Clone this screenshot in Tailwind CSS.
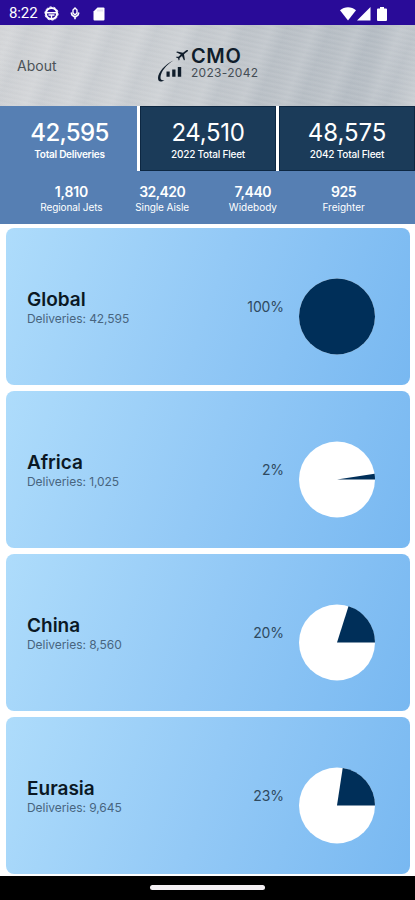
<!DOCTYPE html>
<html lang="en">
<head>
  <meta charset="UTF-8">
  <meta name="viewport" content="width=device-width, initial-scale=1.0">
  <title>CMO 2023-2042</title>
  <script src="https://cdn.jsdelivr.net/npm/@tailwindcss/browser@4"></script>
</head>
<body class="h-[900px] bg-white font-['Inter',sans-serif] flex flex-col overflow-hidden whitespace-nowrap">
  <!-- Status bar -->
  <div class="h-[25px] shrink-0 bg-[#290b98] text-white flex items-center pl-[9px] pr-[28px] pt-[2px]">
    <span class="w-[35px] font-['Roboto',sans-serif] text-[15px] leading-none tracking-[-0.1px]">8:22</span>
    <svg class="w-[15px] h-[15px]" viewBox="0 0 15 15" fill="none" stroke="white">
      <circle cx="7.5" cy="7.5" r="5.6" stroke-width="2"/>
      <circle cx="7.5" cy="7.5" r="6.7" stroke-width="1" stroke-dasharray="2 2.2"/>
      <path d="M3 6.8h9M4.500 9h6" stroke-width="1.6"/>
      <path d="M7.5 9v3.5" stroke-width="1.4"/>
    </svg>
    <svg class="ml-[11px] w-[10px] h-[13px]" viewBox="0 0 10 13" fill="none" stroke="white">
      <path d="M5 1L7 3V6L5 8L3 6V3Z" stroke-width="1.4"/>
      <path d="M1.200 5.500L2 8L5 10.300L8 8L8.800 5.500M5 9V12.300" stroke-width="1.6"/>
    </svg>
    <svg class="ml-[13px] w-[12px] h-[14px]" viewBox="0 0 12 14">
      <path d="M4.500 .5H10.500Q11.500 .5 11.500 1.500V12.500Q11.500 13.500 10.500 13.500H1.500Q.5 13.500 .5 12.500V4.500Z" fill="white"/>
      <path d="M5 2.500v2M7 2.500v2M9 2.500v2" stroke="#290b98" stroke-width=".7" opacity=".3"/>
    </svg>
    <div class="ml-auto flex items-center">
      <svg class="w-[16px] h-[14px]" viewBox="0 0 16 14" fill="white"><path d="M0 3.200C4.500-.7 11.500-.7 16 3.200L8 13.500Z"/></svg>
      <svg class="ml-[1px] w-[14px] h-[14px]" viewBox="0 0 14 14" fill="white"><path d="M13.500 0V13.500H0Z"/></svg>
      <svg class="ml-[6px] w-[10px] h-[14px]" viewBox="0 0 10 14" fill="white"><path d="M3 0H7V1.500H9Q10 1.500 10 2.500V13Q10 14 9 14H1Q0 14 0 13V2.500Q0 1.500 1 1.500H3Z"/></svg>
    </div>
  </div>

  <!-- Brushed header -->
  <header class="h-[81px] shrink-0 flex bg-[repeating-linear-gradient(192deg,#ffffff00_0px,#ffffff18_2px,#ffffff00_5px),repeating-linear-gradient(112deg,#ffffff00_0px,#ffffff18_13px,#8090a010_27px,#ffffff00_40px),linear-gradient(100deg,#d0d2d5_0%,#c9cdd1_40%,#bac0c6_65%,#b5bcc3_88%,#c4c9ce_100%)]">
    <a class="ml-[17px] mt-[32px] w-[140px] text-[14px] leading-[18px] tracking-[0.05px] text-[#4b5258]">About</a>
    <svg class="mt-[22px] w-[34px] h-[37px]" viewBox="0 0 34 37" fill="#101d2b">
      <path d="M16.500 13.500C8 17 1 25.500 1 31C1 35.300 4.300 35.300 7.500 33C5 33.700 3.300 32.800 3.500 30C4 24.500 9 18 16.500 13.500Z"/>
      <path d="M31 3.400C30.300 2.700 29.300 3.200 28 4.200L26 5.800L20 4.400L19.200 5.200L23.800 7.600L21.500 9.800L19.300 9.700L18.800 10.300L21 11.300L21.700 13.500L22.500 13L22.600 11L25 9L27 13.500L27.900 12.800L27 7.200L29 5.500C30.400 4.500 31.400 3.900 31 3.400Z"/>
      <path d="M9.500 24.500h3.200v5.200h-3.200zM15.200 22.500h3.300v7.200h-3.300zM20.800 20h3.400v9.700h-3.400z"/>
    </svg>
    <div class="mt-[19px]">
      <div class="text-[20px] leading-[24px] font-semibold tracking-[0.6px] text-[#101d2b]">CMO</div>
      <div class="-mt-px text-[12px] leading-[12px] tracking-[0.3px] text-[#454d55]">2023-2042</div>
    </div>
  </header>

  <!-- Totals -->
  <div class="h-[65px] shrink-0 bg-white grid grid-cols-[137px_136px_136px] gap-[3px] text-white text-center">
    <div class="bg-[#567fb3] pt-[13px] pl-[2px] font-medium">
      <div class="text-[24px] leading-[27px] tracking-[-0.65px]">42,595</div>
      <div class="text-[10px] leading-[17px] font-semibold tracking-[-0.25px]">Total Deliveries</div>
    </div>
    <div class="bg-[#1b3b59] pt-[12px] border border-[#0d2742]">
      <div class="text-[24px] leading-[27px] tracking-[-0.3px]">24,510</div>
      <div class="text-[10px] leading-[17px] font-medium tracking-[-0.2px]">2022 Total Fleet</div>
    </div>
    <div class="bg-[#1b3b59] pt-[12px] border border-[#0d2742]">
      <div class="text-[24px] leading-[27px] tracking-[-0.1px]">48,575</div>
      <div class="text-[10px] leading-[17px] font-medium tracking-[-0.2px]">2042 Total Fleet</div>
    </div>
  </div>

  <!-- Deliveries by type -->
  <div class="h-[53px] shrink-0 bg-[#567fb3] grid grid-cols-4 px-[26px] pt-[13px] text-white text-center">
    <div>
      <div class="text-[14px] leading-[16px] font-semibold tracking-[-0.2px]">1,810</div>
      <div class="text-[10px] leading-[15px] tracking-[-0.1px]">Regional Jets</div>
    </div>
    <div>
      <div class="text-[14px] leading-[16px] font-semibold tracking-[-0.6px]">32,420</div>
      <div class="text-[10px] leading-[15px] tracking-[-0.1px]">Single Aisle</div>
    </div>
    <div>
      <div class="text-[14px] leading-[16px] font-semibold tracking-[-0.4px]">7,440</div>
      <div class="text-[10px] leading-[15px]">Widebody</div>
    </div>
    <div>
      <div class="text-[14px] leading-[16px] font-semibold tracking-[-0.4px]">925</div>
      <div class="text-[10px] leading-[15px]">Freighter</div>
    </div>
  </div>

  <!-- Regions -->
  <main id="regions" class="h-[652px] shrink-0 overflow-hidden pt-[4px] pl-[6px] pr-[5px] flex flex-col gap-[6px]"></main>

  <!-- Navigation bar -->
  <div class="h-[24px] shrink-0 bg-black flex justify-center pt-[9px]">
    <div class="w-[115px] h-[5px] rounded-full bg-[#f4f0f4]"></div>
  </div>

  <script>
    const regions = [
      { name: 'Global', deliveries: '42,595', percent: 100, share: 1 },
      { name: 'Africa', deliveries: '1,025', percent: 2, share: 0.024 },
      { name: 'China', deliveries: '8,560', percent: 20, share: 0.201 },
      { name: 'Eurasia', deliveries: '9,645', percent: 23, share: 0.226 },
    ];

    // Slice starts at 3 o'clock and runs counter-clockwise
    function slice(share) {
      if (share >= 1) return '<circle cx="38" cy="38.500" r="38" fill="#002f59"/>';
      const a = share * 2 * Math.PI;
      const x = 38 + 38 * Math.cos(a);
      const y = 38.5 - 38 * Math.sin(a);
      return `<path d="M38 38.500H76A38 38 0 0 0 ${x} ${y}Z" fill="#002f59"/>`;
    }

    const container = document.getElementById('regions');
    regions.forEach(r => {
      const card = document.createElement('section');
      card.className = 'h-[157px] shrink-0 rounded-[8px] bg-linear-[110deg,#aedcfb,#93c9f6_50%,#78b8f1] flex pl-[21px] pr-[34px]';
      card.innerHTML = `
        <div class="pt-[60px]">
          <h2 class="text-[19px] leading-[24px] font-semibold text-[#0b1824]">${r.name}</h2>
          <p class="text-[12px] leading-[14px] tracking-[-0.05px] text-[#48657f]">Deliveries: ${r.deliveries}</p>
        </div>
        <div class="ml-auto pt-[70px] text-[14px] leading-[18px] tracking-[-0.1px] text-[#2f4a60]">${r.percent}%</div>
        <svg class="ml-[15px] mt-[50px] w-[77px] h-[77px]" viewBox="0 0 77 77">
          <circle cx="38" cy="38.500" r="38" fill="white"/>${slice(r.share)}
        </svg>
      `;
      container.appendChild(card);
    });
  </script>
</body>
</html>
